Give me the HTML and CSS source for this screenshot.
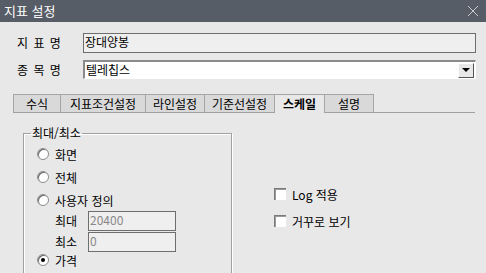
FILE: index.html
```html
<!DOCTYPE html>
<html lang="ko">
<head>
    <meta charset="UTF-8">
    <title>지표 설정</title>
    <link rel="stylesheet" href="styles.css">
</head>
<body>
    <div class="dialog">
        <!-- Title bar -->
        <div class="titlebar">
            <span class="title">지표 설정</span>
            <svg class="close" width="12" height="12" viewBox="0 0 12 12">
                <path d="M1 1 L11 11 M11 1 L1 11" stroke="#c9cbcf" stroke-width="1" fill="none"/>
            </svg>
        </div>

        <!-- Name rows -->
        <div class="row row-name">
            <span class="label">지 표 명</span>
            <div class="textbox">장대양봉</div>
        </div>
        <div class="row row-item">
            <span class="label">종 목 명</span>
            <div class="combo">
                <span class="combo-text">텔레칩스</span>
                <span class="combo-btn"><span class="arrow"></span></span>
            </div>
        </div>

        <!-- Tabs -->
        <div class="tabs">
            <span class="tab t1">수식</span>
            <span class="tab t2">지표조건설정</span>
            <span class="tab t3">라인설정</span>
            <span class="tab t4">기준선설정</span>
            <span class="tab t5 active">스케일</span>
            <span class="tab t6">설명</span>
        </div>

        <!-- Scale page -->
        <div class="page">
            <fieldset class="group">
                <legend>최대/최소</legend>
                <div class="opt first"><span class="radio"></span>화면</div>
                <div class="opt"><span class="radio"></span>전체</div>
                <div class="opt"><span class="radio"></span>사용자 정의</div>
                <div class="range">
                    <span class="range-label">최대</span>
                    <div class="small-box">20400</div>
                </div>
                <div class="range second">
                    <span class="range-label">최소</span>
                    <div class="small-box">0</div>
                </div>
                <div class="opt last"><span class="radio checked"></span>가격</div>
            </fieldset>

            <div class="checks">
                <div class="check"><span class="box"></span>Log 적용</div>
                <div class="check"><span class="box"></span>거꾸로 보기</div>
            </div>
        </div>
    </div>
</body>
</html>
```

FILE: styles.css
```css
body {
    margin: 0;
    padding: 0;
    background-color: #e8e8e8;
    font-family: 'Noto Sans CJK KR', 'Noto Sans', sans-serif;
    font-size: 12px;
    color: #000;
}

.dialog {
    width: 486px;
    height: 273px;
    overflow: hidden;
}

.titlebar {
    height: 22px;
    background: #575d66;
    display: flex;
    align-items: center;
    justify-content: space-between;
    padding: 0 7px 0 4px;
}

.title {
    color: #fff;
    font-size: 13px;
    line-height: 22px;
}

.row {
    display: flex;
    align-items: center;
    padding-left: 17px;
}

.row-name {
    margin-top: 11px;
}

.row-item {
    margin-top: 7px;
}

.label {
    width: 66px;
    line-height: 16px;
    letter-spacing: 1px;
}

.textbox {
    width: 390px;
    height: 18px;
    background: #efefef;
    border: 1px solid #6e6e6e;
    line-height: 16px;
    padding-left: 1px;
}

.combo {
    width: 389px;
    height: 16px;
    background: #fff;
    border-top: 2px solid #8a8a8a;
    border-left: 2px solid #8a8a8a;
    border-right: 1px solid #fff;
    border-bottom: 1px solid #fff;
    display: flex;
    align-items: center;
    justify-content: space-between;
    padding-left: 1px;
}

.combo-text {
    line-height: 16px;
}

.combo-btn {
    width: 14px;
    height: 13px;
    background: #e8e8e8;
    border-top: 1px solid #fff;
    border-left: 1px solid #fff;
    border-right: 1px solid #555;
    border-bottom: 1px solid #555;
    margin-right: 1px;
    display: flex;
    align-items: center;
    justify-content: center;
}

.arrow {
    width: 0;
    height: 0;
    border-left: 4px solid transparent;
    border-right: 4px solid transparent;
    border-top: 4px solid #000;
}

.tabs {
    margin: 15px 0 0 13px;
    width: 462px;
    height: 18px;
    border-bottom: 1px solid #a0a0a0;
    display: flex;
}

.tab {
    height: 18px;
    box-sizing: border-box;
    background: #d9d9d9;
    border: 1px solid #a6a6a6;
    border-bottom: none;
    border-left: none;
    text-align: center;
    line-height: 17px;
}

.t1 { width: 48px; border-left: 1px solid #a6a6a6; }
.t2 { width: 85px; }
.t3 { width: 59px; }
.t4 { width: 70px; }
.t5 { width: 50px; }
.t6 { width: 49px; }

.tab.active {
    background: #e8e8e8;
    font-weight: bold;
    height: 19px;
}

.page {
    display: flex;
    align-items: flex-start;
    padding: 12px 0 0 23px;
}

.group {
    width: 209px;
    height: 200px;
    margin: 0;
    padding: 0 0 0 13px;
    border: 1px solid #a0a0a0;
    box-shadow: 1px 1px 0 #fff, inset 1px 1px 0 #fff;
    box-sizing: border-box;
}

.group legend {
    padding: 0 1px;
    margin-left: -6px;
    line-height: 16px;
}

.opt {
    display: flex;
    align-items: center;
    height: 16px;
    margin-top: 7px;
}

.opt.first {
    margin-top: 5px;
}

.opt.last {
    margin-top: 0;
}

.radio {
    width: 10px;
    height: 10px;
    border-radius: 50%;
    background: #fff;
    border: 1px solid #8c8c8c;
    box-shadow: inset 1px 1px 0 #6a6a6a;
    margin-right: 6px;
    display: flex;
    align-items: center;
    justify-content: center;
}

.radio.checked::after {
    content: '';
    width: 4px;
    height: 4px;
    border-radius: 50%;
    background: #000;
}

.range {
    display: flex;
    align-items: center;
    margin-top: 3px;
    padding-left: 18px;
}

.range.second {
    margin-top: 1px;
}

.range-label {
    width: 33px;
    flex-shrink: 0;
    line-height: 16px;
}

.small-box {
    width: 85px;
    height: 18px;
    background: #efefef;
    border: 1px solid #6e6e6e;
    color: #888;
    line-height: 16px;
    padding-left: 1px;
}

.checks {
    margin: 61px 0 0 42px;
}

.check {
    display: flex;
    align-items: center;
    height: 16px;
    margin-bottom: 11px;
}

.box {
    width: 11px;
    height: 11px;
    background: #fff;
    border-top: 1px solid #7a7a7a;
    border-left: 1px solid #7a7a7a;
    box-shadow: inset 1px 1px 0 #9a9a9a;
    margin-right: 6px;
}
```
